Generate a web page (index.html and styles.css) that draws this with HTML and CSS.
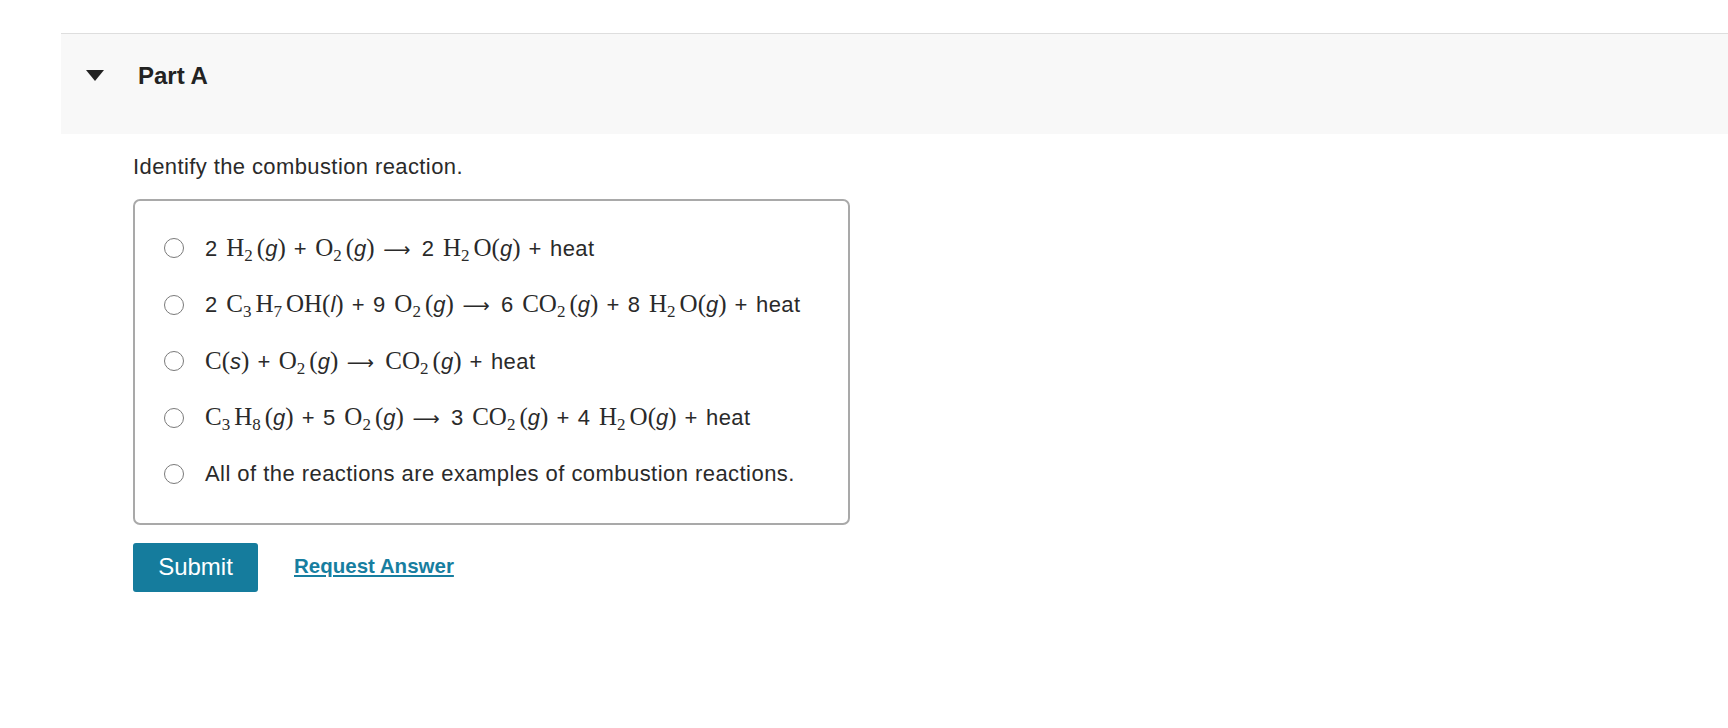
FILE: index.html
```html
<!DOCTYPE html>
<html>
<head>
<meta charset="utf-8">
<link rel="stylesheet" href="styles.css">
</head>
<body>
<div class="part-header">
  <div class="part-title-row">
    <span class="caret"></span>
    <span class="part-title">Part A</span>
  </div>
</div>
<div class="content">
  <p class="prompt">Identify the combustion reaction.</p>
  <div class="choices">
    <label class="choice"><span class="radio"></span><span class="eq"><span class="c">2</span> <span class="m">H<sub>2</sub>(</span><i>g</i><span class="m">)</span> <span class="op">+</span> <span class="m">O<sub>2</sub>(</span><i>g</i><span class="m">)</span> <span class="arrow">⟶</span> <span class="c">2</span> <span class="m">H<sub>2</sub>O(</span><i>g</i><span class="m">)</span> <span class="op">+</span> heat</span></label>
    <label class="choice"><span class="radio"></span><span class="eq"><span class="c">2</span> <span class="m">C<sub>3</sub>H<sub>7</sub>OH(</span><i>l</i><span class="m">)</span> <span class="op">+</span> <span class="c">9</span> <span class="m">O<sub>2</sub>(</span><i>g</i><span class="m">)</span> <span class="arrow">⟶</span> <span class="c">6</span> <span class="m">CO<sub>2</sub>(</span><i>g</i><span class="m">)</span> <span class="op">+</span> <span class="c">8</span> <span class="m">H<sub>2</sub>O(</span><i>g</i><span class="m">)</span> <span class="op">+</span> heat</span></label>
    <label class="choice"><span class="radio"></span><span class="eq"><span class="m">C(</span><i>s</i><span class="m">)</span> <span class="op">+</span> <span class="m">O<sub>2</sub>(</span><i>g</i><span class="m">)</span> <span class="arrow">⟶</span> <span class="m">CO<sub>2</sub>(</span><i>g</i><span class="m">)</span> <span class="op">+</span> heat</span></label>
    <label class="choice"><span class="radio"></span><span class="eq"><span class="m">C<sub>3</sub>H<sub>8</sub>(</span><i>g</i><span class="m">)</span> <span class="op">+</span> <span class="c">5</span> <span class="m">O<sub>2</sub>(</span><i>g</i><span class="m">)</span> <span class="arrow">⟶</span> <span class="c">3</span> <span class="m">CO<sub>2</sub>(</span><i>g</i><span class="m">)</span> <span class="op">+</span> <span class="c">4</span> <span class="m">H<sub>2</sub>O(</span><i>g</i><span class="m">)</span> <span class="op">+</span> heat</span></label>
    <label class="choice"><span class="radio"></span><span class="eq">All of the reactions are examples of combustion reactions.</span></label>
  </div>
  <div class="actions">
    <button class="submit">Submit</button>
    <a class="request" href="#">Request Answer</a>
  </div>
</div>
</body>
</html>
```
FILE: styles.css
```css
html, body {
  margin: 0;
  padding: 0;
  background: #ffffff;
}
body {
  font-family: "Liberation Sans", Arial, sans-serif;
  color: #2a2a2a;
}
.part-header {
  margin-top: 33px;
  margin-left: 61px;
  height: 101px;
  box-sizing: border-box;
  border-top: 1px solid #dedede;
  background: #f8f8f8;
  padding: 28px 0 0 25px;
}
.part-title-row {
  display: flex;
  align-items: center;
  height: 28px;
  gap: 34px;
}
.caret {
  width: 0;
  height: 0;
  border-left: 9px solid transparent;
  border-right: 9px solid transparent;
  border-top: 11px solid #222;
  margin-top: -1px;
}
.part-title {
  font-weight: bold;
  font-size: 24px;
  line-height: 28px;
  color: #222;
}
.content {
  padding-left: 133px;
}
.prompt {
  margin: 20px 0 0 0;
  font-size: 22px;
  letter-spacing: 0.4px;
  line-height: 26px;
  color: #2a2a2a;
}
.choices {
  margin-top: 19px;
  width: 717px;
  box-sizing: border-box;
  border: 2px solid #a9a9a9;
  border-radius: 7px;
  padding: 19px 0 20px 0;
}
.choice {
  display: flex;
  align-items: center;
  height: 56.5px;
  padding-left: 29px;
  font-size: 22px;
  letter-spacing: 0.45px;
  color: #2a2a2a;
}
.radio {
  width: 20px;
  height: 20px;
  box-sizing: border-box;
  border: 1.5px solid #7a7a7a;
  border-radius: 50%;
  background: #fff;
  flex: none;
  margin-right: 21px;
}
.eq {
  white-space: pre;
  line-height: 28px;
}
.m {
  font-family: "Liberation Serif", "Times New Roman", serif;
  font-size: 25px;
  letter-spacing: 0;
}
.m sub {
  font-size: 17px;
  vertical-align: -5px;
  line-height: 0;
  margin-right: 4px;
}
.eq i {
  font-family: "Liberation Sans", Arial, sans-serif;
  font-style: italic;
  letter-spacing: 0;
}
.c {
  margin-right: 2px;
}
.op {
  margin: 0 1.5px;
}
.arrow {
  display: inline-block;
  width: 30px;
  margin: 0 2px;
  font-family: "DejaVu Sans", sans-serif;
  font-size: 19px;
  letter-spacing: 0;
  overflow: visible;
  color: #2a2a2a;
}
.actions {
  display: flex;
  align-items: center;
  margin-top: 18px;
  gap: 36px;
}
.submit {
  width: 125px;
  height: 49px;
  border: none;
  border-radius: 3px;
  background: #157c9d;
  color: #ffffff;
  font-family: "Liberation Sans", Arial, sans-serif;
  font-size: 24px;
  padding: 0;
}
.request {
  font-weight: bold;
  font-size: 20.5px;
  color: #177ea0;
  text-decoration: underline;
  text-underline-offset: 2px;
  margin-top: -2px;
}
```
